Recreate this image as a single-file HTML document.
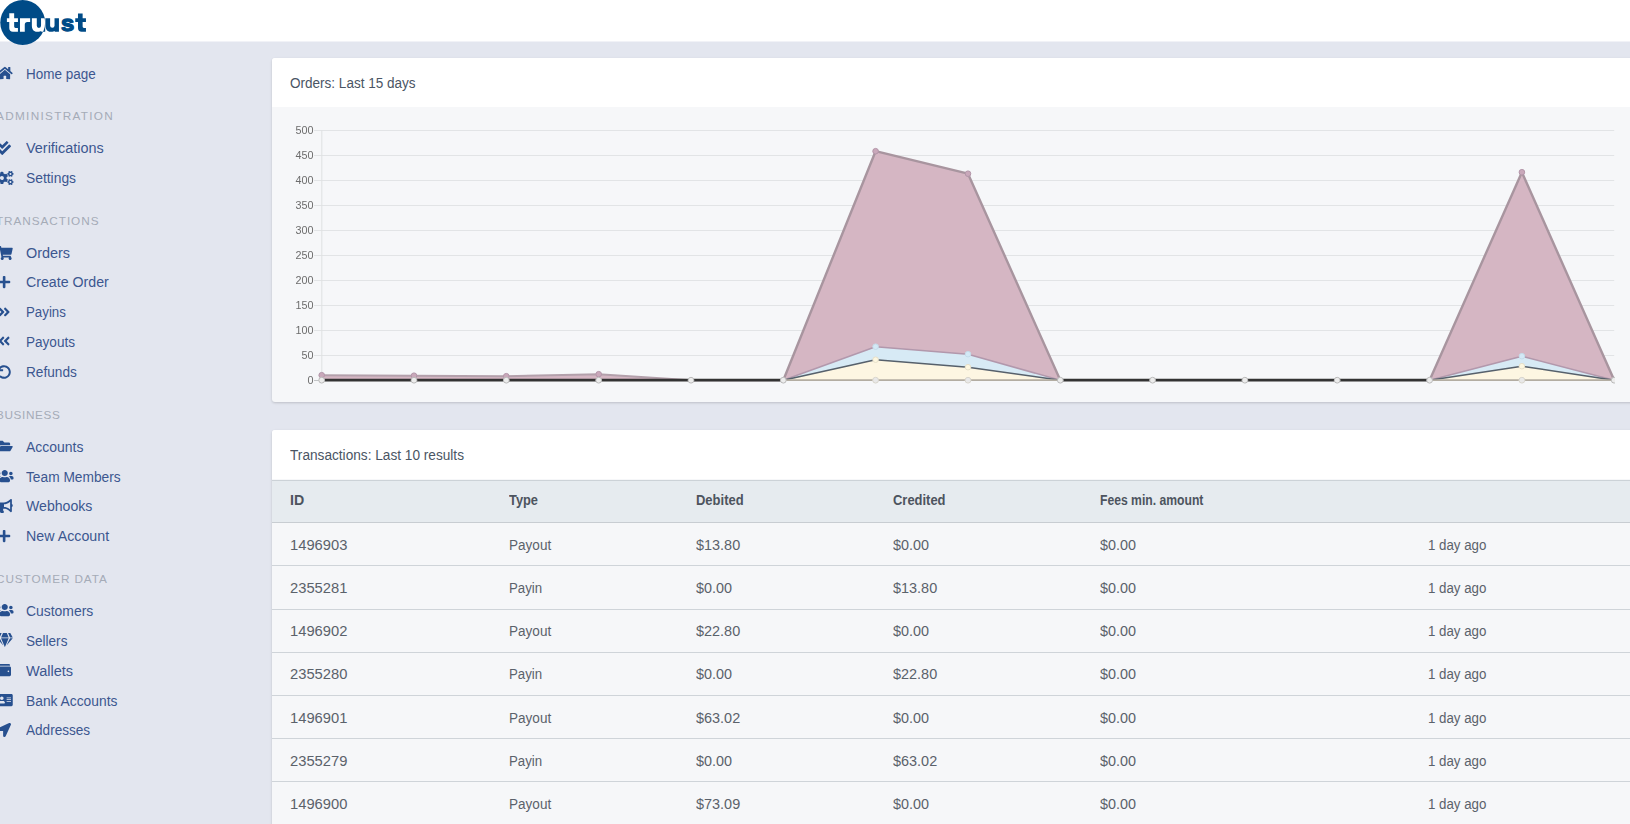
<!DOCTYPE html>
<html>
<head>
<meta charset="utf-8">
<title>Truust</title>
<style>
*{box-sizing:border-box;}
html,body{margin:0;padding:0;}
body{width:1630px;height:824px;overflow:hidden;background:#e3e6ef;font-family:"Liberation Sans",sans-serif;position:relative;}
#topbar{position:absolute;left:0;top:0;width:1630px;height:42px;background:#fff;border-bottom:1px solid #f1f2f7;}
#logo{position:absolute;left:0;top:0;}
.t{position:absolute;white-space:nowrap;font-family:"Liberation Sans",sans-serif;transform-origin:0 50%;}
.card{position:absolute;left:272px;width:1400px;background:#f6f7f9;border-radius:3px;box-shadow:0 1px 3px rgba(0,0,0,.12),0 1px 2px rgba(0,0,0,.05);overflow:hidden;}
.card .hd{position:absolute;left:0;top:0;width:1400px;height:49px;background:#fff;}
#c1{top:58px;height:344px;}
#c2{top:430px;height:420px;}
#chart{position:absolute;left:0;top:0;will-change:transform;}
</style>
</head>
<body>
<div id="topbar"></div>
<svg id="logo" width="100" height="50" viewBox="0 0 100 50">
<defs><clipPath id="cc"><circle cx="22.7" cy="22.5" r="22.45"/></clipPath>
<g id="lt" font-family="Liberation Sans, sans-serif" font-weight="700" font-size="24.6" stroke-width="0" stroke-linejoin="round"><path d="M9.27 13.30H14.17V18.19H17.93V22.1H14.17V26.60Q14.17 27.9 15.47 27.9H17.93V31.8H12.97Q9.27 31.8 9.27 28.10V22.1H6.89V18.19H9.27Z M19.97 18.19H30.16V22.1H27.37Q24.77 22.1 24.77 24.70V31.8H19.97Z M31.86 18.19H36.79V25.77A2.12 2.12 0 0 0 41.04 25.77V18.19H45.20V31.8H41.24V31.10C39.04 32.35 31.86 32.70 31.86 25.90Z M45.55 18.19H50.12V25.69A2.21 2.21 0 0 0 54.53 25.69V18.19H58.95V31.8H54.73V31.10C52.53 32.35 45.55 32.70 45.55 25.90Z M77.98 13.45H82.63V18.19H85.96V22.1H82.63V26.60Q82.63 27.9 83.93 27.9H85.96V31.8H81.68Q77.98 31.8 77.98 28.10V22.1H75.26V18.19H77.98Z"/><text transform="translate(61.06,30.98) scale(0.966,0.923)" stroke-width="1.5">s</text></g></defs>
<use href="#lt" fill="#004b87" stroke="#004b87"/>
<circle cx="22.7" cy="22.5" r="22.45" fill="#004b87"/>
<use href="#lt" fill="#fff" stroke="#fff" clip-path="url(#cc)"/>
</svg>
<div id="side">
<svg style="position:absolute;left:-3.47px;top:65.80px;overflow:visible" width="15.75" height="14.0" viewBox="0 0 576 512"><path fill="#27508f" d="M280.37 148.26L96 300.11V464a16 16 0 0 0 16 16l112.06-.29a16 16 0 0 0 15.92-16V368a16 16 0 0 1 16-16h64a16 16 0 0 1 16 16v95.64a16 16 0 0 0 16 16.05L464 480a16 16 0 0 0 16-16V300L295.67 148.26a12.19 12.19 0 0 0-15.3 0zM571.6 251.47L488 182.56V44.05a12 12 0 0 0-12-12h-56a12 12 0 0 0-12 12v72.61L318.47 43a48 48 0 0 0-61 0L4.34 251.47a12 12 0 0 0-1.6 16.9l25.5 31A12 12 0 0 0 45.15 301l235.22-193.74a12.19 12.19 0 0 1 15.3 0L530.9 301a12 12 0 0 0 16.9-1.6l25.5-31a12 12 0 0 0-1.7-16.93z"/></svg>
<div class="t" style="left:26.00px;top:64.00px;font-size:14px;line-height:20px;color:#3c578f;transform:scaleX(0.9628);">Home page</div>
<svg style="position:absolute;left:-2.60px;top:140.80px;overflow:visible" width="14.00" height="14.0" viewBox="0 0 512 512"><path fill="#27508f" d="M505 174.8l-39.6-39.6c-9.4-9.4-24.6-9.4-33.9 0L192 374.700 80.600 263.200c-9.400-9.400-24.600-9.400-33.900 0L7 302.900c-9.400 9.400-9.400 24.600 0 34L175 505c9.400 9.400 24.600 9.400 33.900 0l296-296.200c9.400-9.500 9.400-24.700.1-34zm-324.300 106c6.200 6.300 16.400 6.300 22.600 0l208-208.200c6.200-6.300 6.200-16.400 0-22.600L366.100 4.700c-6.200-6.300-16.400-6.300-22.600 0L192 156.200l-55.400-55.500c-6.200-6.300-16.400-6.300-22.600 0L68.700 146c-6.200 6.300-6.200 16.400 0 22.600l112 112.200z"/></svg>
<div class="t" style="left:26.00px;top:138.00px;font-size:14px;line-height:20px;color:#3c578f;transform:scaleX(1.0294);">Verifications</div>
<svg style="position:absolute;left:-4.35px;top:170.60px;overflow:visible" width="17.50" height="14.0" viewBox="0 0 640 512"><path fill="#27508f" d="M512.1 191l-8.2 14.3c-3 5.3-9.4 7.5-15.1 5.4-11.800-4.400-22.600-10.700-32.100-18.600-4.600-3.800-5.800-10.500-2.800-15.700l8.200-14.300c-6.900-8-12.300-17.300-15.900-27.400h-16.500c-6 0-11.200-4.300-12.200-10.300-2-12-2.100-24.600 0-37.100 1-6 6.200-10.400 12.200-10.400h16.500c3.600-10.100 9-19.400 15.900-27.400l-8.200-14.300c-3-5.200-1.900-11.900 2.800-15.700 9.500-7.900 20.400-14.200 32.100-18.600 5.700-2.100 12.100.1 15.100 5.400l8.200 14.300c10.500-1.900 21.200-1.900 31.700 0L552 6.300c3-5.300 9.400-7.500 15.100-5.400 11.800 4.400 22.600 10.700 32.100 18.600 4.600 3.800 5.800 10.500 2.800 15.700l-8.200 14.300c6.900 8 12.300 17.300 15.900 27.400h16.500c6 0 11.200 4.300 12.200 10.300 2 12 2.100 24.600 0 37.100-1 6-6.200 10.400-12.200 10.400h-16.500c-3.600 10.100-9 19.400-15.900 27.400l8.200 14.300c3 5.200 1.900 11.900-2.800 15.700-9.500 7.900-20.400 14.200-32.100 18.600-5.700 2.100-12.100-.1-15.100-5.400l-8.200-14.300c-10.400 1.900-21.200 1.900-31.700 0zm-10.500-58.800c38.500 29.600 82.400-14.300 52.800-52.800-38.500-29.700-82.400 14.300-52.800 52.800zM386.300 286.100l33.700 16.800c10.100 5.800 14.500 18.100 10.500 29.100-8.900 24.200-26.400 46.400-42.600 65.800-7.400 8.900-20.200 11.100-30.300 5.300l-29.100-16.800c-16 13.700-34.600 24.600-54.900 31.700v33.600c0 11.600-8.300 21.600-19.700 23.600-24.600 4.200-50.400 4.400-75.900 0-11.500-2-20-11.900-20-23.600V418c-20.300-7.200-38.900-18-54.900-31.700L74 403c-10 5.800-22.900 3.600-30.300-5.300-16.200-19.400-33.300-41.600-42.200-65.700-4-10.900.4-23.200 10.500-29.100l33.300-16.800c-3.900-20.900-3.900-42.400 0-63.400L12 205.800c-10.100-5.800-14.600-18.100-10.500-29 8.900-24.200 26-46.400 42.200-65.800 7.400-8.900 20.200-11.100 30.300-5.300l29.100 16.800c16-13.700 34.600-24.600 54.900-31.700V57.100c0-11.500 8.200-21.500 19.600-23.500 24.600-4.200 50.500-4.400 76-.1 11.500 2 20 11.900 20 23.600v33.600c20.300 7.200 38.900 18 54.900 31.700l29.100-16.800c10-5.800 22.900-3.600 30.300 5.300 16.200 19.400 33.200 41.600 42.100 65.800 4 10.900.1 23.200-10 29.100l-33.700 16.800c3.900 21 3.900 42.500 0 63.500zm-117.600 21.100c59.200-77-28.700-164.900-105.700-105.700-59.200 77 28.700 164.900 105.700 105.700zm243.400 182.700l-8.200 14.300c-3 5.300-9.400 7.500-15.100 5.400-11.800-4.400-22.600-10.700-32.100-18.600-4.600-3.800-5.800-10.500-2.800-15.700l8.200-14.300c-6.900-8-12.300-17.300-15.900-27.400h-16.500c-6 0-11.200-4.300-12.200-10.300-2-12-2.100-24.600 0-37.100 1-6 6.200-10.400 12.200-10.400h16.500c3.600-10.100 9-19.400 15.900-27.400l-8.200-14.300c-3-5.200-1.900-11.900 2.800-15.700 9.500-7.900 20.400-14.200 32.100-18.600 5.700-2.100 12.100.1 15.100 5.400l8.200 14.300c10.500-1.900 21.200-1.900 31.700 0l8.200-14.300c3-5.300 9.400-7.500 15.100-5.400 11.800 4.400 22.600 10.700 32.100 18.600 4.600 3.800 5.800 10.500 2.800 15.700l-8.200 14.300c6.900 8 12.300 17.300 15.900 27.400h16.500c6 0 11.200 4.300 12.200 10.300 2 12 2.100 24.600 0 37.100-1 6-6.200 10.400-12.200 10.400h-16.500c-3.600 10.100-9 19.400-15.900 27.400l8.200 14.300c3 5.200 1.900 11.900-2.800 15.700-9.500 7.900-20.400 14.200-32.100 18.600-5.700 2.100-12.100-.1-15.100-5.400l-8.200-14.300c-10.400 1.900-21.200 1.900-31.700 0zM501.600 431c38.500 29.600 82.400-14.300 52.800-52.800-38.500-29.600-82.400 14.300-52.800 52.800z"/></svg>
<div class="t" style="left:26.00px;top:168.00px;font-size:14px;line-height:20px;color:#3c578f;transform:scaleX(0.9883);">Settings</div>
<svg style="position:absolute;left:-3.47px;top:245.60px;overflow:visible" width="15.75" height="14.0" viewBox="0 0 576 512"><path fill="#27508f" d="M528.12 301.319l47.273-208C578.806 78.301 567.391 64 551.99 64H159.208l-9.166-44.81C147.758 8.021 137.93 0 126.529 0H24C10.745 0 0 10.745 0 24v16c0 13.255 10.745 24 24 24h69.883l70.248 343.435C147.325 417.100 136 435.222 136 456c0 30.928 25.072 56 56 56s56-25.072 56-56c0-15.674-6.447-29.835-16.824-40h209.647C430.447 426.165 424 440.326 424 456c0 30.928 25.072 56 56 56s56-25.072 56-56c0-22.172-12.888-41.332-31.579-50.405l5.517-24.276c3.413-15.018-8.002-29.319-23.403-29.319H218.117l-6.545-32h293.145c11.206 0 20.920-7.754 23.403-18.681z"/></svg>
<div class="t" style="left:26.00px;top:243.00px;font-size:14px;line-height:20px;color:#3c578f;transform:scaleX(1.0304);">Orders</div>
<svg style="position:absolute;left:-1.72px;top:274.80px;overflow:visible" width="12.25" height="14.0" viewBox="0 0 448 512"><path fill="#27508f" d="M416 208H272V64c0-17.67-14.33-32-32-32h-32c-17.67 0-32 14.33-32 32v144H32c-17.67 0-32 14.33-32 32v32c0 17.67 14.33 32 32 32h144v144c0 17.67 14.33 32 32 32h32c17.67 0 32-14.33 32-32V304h144c17.67 0 32-14.33 32-32v-32c0-17.67-14.33-32-32-32z"/></svg>
<div class="t" style="left:26.00px;top:272.00px;font-size:14px;line-height:20px;color:#3c578f;transform:scaleX(1.0134);">Create Order</div>
<svg style="position:absolute;left:-1.72px;top:304.50px;overflow:visible" width="12.25" height="14.0" viewBox="0 0 448 512"><path fill="#27508f" d="M224.3 273l-136 136c-9.4 9.4-24.6 9.4-33.9 0l-22.6-22.6c-9.4-9.4-9.4-24.6 0-33.9l96.4-96.4-96.4-96.4c-9.4-9.4-9.4-24.6 0-33.9L54.3 103c9.4-9.4 24.6-9.4 33.9 0l136 136c9.5 9.4 9.5 24.6.1 34zm192-34l-136-136c-9.4-9.4-24.6-9.4-33.9 0l-22.6 22.6c-9.4 9.4-9.4 24.6 0 33.9l96.4 96.4-96.4 96.4c-9.4 9.4-9.4 24.6 0 33.9l22.6 22.6c9.4 9.4 24.6 9.4 33.9 0l136-136c9.4-9.2 9.4-24.4 0-33.800z"/></svg>
<div class="t" style="left:26.00px;top:302.00px;font-size:14px;line-height:20px;color:#3c578f;transform:scaleX(0.9493);">Payins</div>
<svg style="position:absolute;left:-1.72px;top:334.40px;overflow:visible" width="12.25" height="14.0" viewBox="0 0 448 512"><path fill="#27508f" d="M223.7 239l136-136c9.4-9.4 24.6-9.4 33.9 0l22.6 22.6c9.4 9.4 9.4 24.6 0 33.9L319.9 256l96.4 96.4c9.4 9.4 9.4 24.6 0 33.9L393.7 409c-9.4 9.4-24.6 9.4-33.9 0l-136-136c-9.5-9.4-9.5-24.6-.1-34zm-192 34l136 136c9.4 9.4 24.6 9.4 33.9 0l22.6-22.6c9.4-9.4 9.4-24.6 0-33.9L127.9 256l96.4-96.4c9.4-9.4 9.4-24.6 0-33.9L201.700 103c-9.4-9.4-24.6-9.4-33.9 0l-136 136c-9.5 9.4-9.5 24.6-.1 34z"/></svg>
<div class="t" style="left:26.00px;top:332.00px;font-size:14px;line-height:20px;color:#3c578f;transform:scaleX(0.9685);">Payouts</div>
<svg style="position:absolute;left:-2.60px;top:364.50px;overflow:visible" width="14.00" height="14.0" viewBox="0 0 512 512"><path fill="#27508f" d="M212.333 224.333H12c-6.627 0-12-5.373-12-12V12C0 5.373 5.373 0 12 0h48c6.627 0 12 5.373 12 12v78.112C117.773 39.279 184.260 7.470 258.175 8.007c136.906.994 246.448 111.623 246.157 248.532C504.041 393.258 393.120 504 256.333 504c-64.089 0-122.496-24.313-166.510-64.215-5.099-4.622-5.334-12.554-.467-17.420l33.967-33.967c4.474-4.474 11.662-4.717 16.401-.525C170.760 415.336 211.580 432 256.333 432c97.268 0 176-78.716 176-176 0-97.267-78.716-176-176-176-58.496 0-110.280 28.476-142.274 72.333h98.274c6.627 0 12 5.373 12 12v48c0 6.627-5.373 12-12 12z"/></svg>
<div class="t" style="left:26.00px;top:362.00px;font-size:14px;line-height:20px;color:#3c578f;transform:scaleX(0.9740);">Refunds</div>
<svg style="position:absolute;left:-3.47px;top:439.40px;overflow:visible" width="15.75" height="14.0" viewBox="0 0 576 512"><path fill="#27508f" d="M572.694 292.093L500.270 416.248A63.997 63.997 0 0 1 444.989 448H45.025c-18.523 0-30.064-20.093-20.731-36.093l72.424-124.155A64 64 0 0 1 152 256h399.964c18.523 0 30.064 20.093 20.730 36.093zM152 224h328v-48c0-26.510-21.490-48-48-48H272l-64-64H48C21.490 64 0 85.490 0 112v278.046l69.077-118.418C86.214 242.250 117.989 224 152 224z"/></svg>
<div class="t" style="left:26.00px;top:437.00px;font-size:14px;line-height:20px;color:#3c578f;transform:scaleX(0.9984);">Accounts</div>
<svg style="position:absolute;left:-4.35px;top:469.30px;overflow:visible" width="17.50" height="14.0" viewBox="0 0 640 512"><path fill="#27508f" d="M96 224c35.3 0 64-28.7 64-64s-28.7-64-64-64-64 28.7-64 64 28.7 64 64 64zm448 0c35.3 0 64-28.7 64-64s-28.7-64-64-64-64 28.7-64 64 28.7 64 64 64zm32 32h-64c-17.6 0-33.5 7.1-45.1 18.6 40.3 22.1 68.9 62 75.1 109.4h66c17.7 0 32-14.3 32-32v-32c0-35.3-28.7-64-64-64zm-256 0c61.9 0 112-50.1 112-112S381.9 32 320 32 208 82.1 208 144s50.1 112 112 112zm76.8 32h-8.3c-20.8 10-43.9 16-68.5 16s-47.6-6-68.500-16h-8.300C179.600 288 128 339.600 128 403.200V432c0 26.500 21.500 48 48 48h288c26.500 0 48-21.500 48-48v-28.800c0-63.600-51.600-115.200-115.200-115.200zm-223.700-13.400C161.500 263.100 145.600 256 128 256H64c-35.300 0-64 28.700-64 64v32c0 17.700 14.300 32 32 32h65.900c6.300-47.400 34.900-87.300 75.200-109.400z"/></svg>
<div class="t" style="left:26.00px;top:467.00px;font-size:14px;line-height:20px;color:#3c578f;transform:scaleX(0.9806);">Team Members</div>
<svg style="position:absolute;left:-3.47px;top:498.50px;overflow:visible" width="15.75" height="14.0" viewBox="0 0 576 512"><path fill="#27508f" d="M576 240c0-23.63-12.95-44.04-32-55.12V32.01C544 23.26 537.02 0 512 0c-7.12 0-14.19 2.38-19.98 7.02l-85.03 68.03C364.28 109.19 310.66 128 256 128H64c-35.35 0-64 28.65-64 64v96c0 35.35 28.65 64 64 64h33.7c-1.39 10.48-2.18 21.14-2.18 32 0 39.77 9.26 77.35 25.56 110.94 5.19 10.69 16.52 17.06 28.4 17.06h74.28c26.05 0 41.69-29.84 25.9-50.56-16.4-21.52-26.15-48.36-26.15-77.44 0-11.11 1.62-21.79 4.41-32H256c54.66 0 108.28 18.81 150.98 52.95l85.03 68.03a32.023 32.023 0 0 0 19.98 7.02c24.92 0 32-22.78 32-32V295.13C563.05 284.04 576 263.63 576 240zm-96 141.42l-33.05-26.44C392.95 311.78 325.12 288 256 288v-96c69.12 0 136.95-23.78 190.95-66.98L480 98.58v282.84z"/></svg>
<div class="t" style="left:26.00px;top:496.00px;font-size:14px;line-height:20px;color:#3c578f;transform:scaleX(1.0075);">Webhooks</div>
<svg style="position:absolute;left:-1.72px;top:528.90px;overflow:visible" width="12.25" height="14.0" viewBox="0 0 448 512"><path fill="#27508f" d="M416 208H272V64c0-17.67-14.33-32-32-32h-32c-17.67 0-32 14.33-32 32v144H32c-17.67 0-32 14.33-32 32v32c0 17.67 14.33 32 32 32h144v144c0 17.67 14.33 32 32 32h32c17.67 0 32-14.33 32-32V304h144c17.67 0 32-14.33 32-32v-32c0-17.67-14.33-32-32-32z"/></svg>
<div class="t" style="left:26.00px;top:526.00px;font-size:14px;line-height:20px;color:#3c578f;transform:scaleX(1.0169);">New Account</div>
<svg style="position:absolute;left:-4.35px;top:602.90px;overflow:visible" width="17.50" height="14.0" viewBox="0 0 640 512"><path fill="#27508f" d="M96 224c35.3 0 64-28.7 64-64s-28.7-64-64-64-64 28.7-64 64 28.7 64 64 64zm448 0c35.3 0 64-28.7 64-64s-28.7-64-64-64-64 28.7-64 64 28.7 64 64 64zm32 32h-64c-17.6 0-33.5 7.1-45.1 18.6 40.3 22.1 68.9 62 75.1 109.4h66c17.7 0 32-14.3 32-32v-32c0-35.3-28.7-64-64-64zm-256 0c61.9 0 112-50.1 112-112S381.9 32 320 32 208 82.1 208 144s50.1 112 112 112zm76.8 32h-8.3c-20.8 10-43.9 16-68.5 16s-47.6-6-68.500-16h-8.300C179.600 288 128 339.600 128 403.200V432c0 26.500 21.500 48 48 48h288c26.500 0 48-21.500 48-48v-28.800c0-63.600-51.600-115.200-115.200-115.200zm-223.700-13.400C161.500 263.100 145.600 256 128 256H64c-35.300 0-64 28.700-64 64v32c0 17.700 14.300 32 32 32h65.900c6.300-47.400 34.900-87.300 75.200-109.400z"/></svg>
<div class="t" style="left:26.00px;top:601.00px;font-size:14px;line-height:20px;color:#3c578f;transform:scaleX(0.9943);">Customers</div>
<svg style="position:absolute;left:-3.47px;top:632.70px;overflow:visible" width="15.75" height="14.0" viewBox="0 0 576 512"><path fill="#27508f" d="M485.5 0L576 160H474.9L405.7 0h79.8zm-128 0l69.2 160H149.3L218.5 0h139zm-267 0h79.8l-69.2 160H0L90.5 0zM0 192h100.7l123 251.7c1.5 3.1-2.7 5.9-5 3.300L0 192zm148.2 0h279.6l-137 318.200c-1 2.400-4.500 2.400-5.500 0L148.200 192zm204.100 251.700l123-251.700H576L357.300 446.900c-2.300 2.700-6.500-.1-5-3.200z"/></svg>
<div class="t" style="left:26.00px;top:631.00px;font-size:14px;line-height:20px;color:#3c578f;transform:scaleX(0.9674);">Sellers</div>
<svg style="position:absolute;left:-2.60px;top:662.80px;overflow:visible" width="14.00" height="14.0" viewBox="0 0 512 512"><path fill="#27508f" d="M461.2 128H80c-8.84 0-16-7.16-16-16s7.16-16 16-16h384c8.84 0 16-7.16 16-16 0-26.51-21.49-48-48-48H64C28.65 32 0 60.65 0 96v320c0 35.35 28.65 64 64 64h397.2c28.02 0 50.8-21.53 50.8-48V176c0-26.47-22.78-48-50.8-48zM416 336c-17.67 0-32-14.33-32-32s14.33-32 32-32 32 14.33 32 32-14.33 32-32 32z"/></svg>
<div class="t" style="left:26.00px;top:661.00px;font-size:14px;line-height:20px;color:#3c578f;transform:scaleX(1.0377);">Wallets</div>
<svg style="position:absolute;left:-3.47px;top:692.70px;overflow:visible" width="15.75" height="14.0" viewBox="0 0 576 512"><path fill="#27508f" d="M528 32H48C21.5 32 0 53.5 0 80v352c0 26.5 21.5 48 48 48h480c26.5 0 48-21.5 48-48V80c0-26.5-21.5-48-48-48zm-352 96c35.3 0 64 28.7 64 64s-28.7 64-64 64-64-28.7-64-64 28.7-64 64-64zm112 236.800c0 10.600-10 19.200-22.400 19.200H86.400C74 384 64 375.400 64 364.800v-19.200c0-31.800 30.100-57.600 67.200-57.600h5c12.300 5.100 25.700 8 39.800 8s27.600-2.900 39.800-8h5c37.100 0 67.200 25.800 67.200 57.600v19.200zM512 312c0 4.400-3.600 8-8 8H360c-4.400 0-8-3.600-8-8v-16c0-4.400 3.600-8 8-8h144c4.400 0 8 3.600 8 8v16zm0-64c0 4.400-3.600 8-8 8H360c-4.400 0-8-3.600-8-8v-16c0-4.400 3.600-8 8-8h144c4.400 0 8 3.600 8 8v16zm0-64c0 4.400-3.600 8-8 8H360c-4.400 0-8-3.600-8-8v-16c0-4.400 3.600-8 8-8h144c4.400 0 8 3.600 8 8v16z"/></svg>
<div class="t" style="left:26.00px;top:691.00px;font-size:14px;line-height:20px;color:#3c578f;transform:scaleX(0.9868);">Bank Accounts</div>
<svg style="position:absolute;left:-2.60px;top:722.70px;overflow:visible" width="14.00" height="14.0" viewBox="0 0 512 512"><path fill="#27508f" d="M444.52 3.52L28.74 195.42c-47.97 22.39-31.98 92.75 19.19 92.75h175.91v175.91c0 51.17 70.36 67.17 92.75 19.19l191.9-415.78c15.99-38.39-25.59-79.97-63.97-63.97z"/></svg>
<div class="t" style="left:26.00px;top:720.00px;font-size:14px;line-height:20px;color:#3c578f;transform:scaleX(0.9689);">Addresses</div>
<div class="t" style="left:-4.20px;top:108.00px;font-size:10.8px;line-height:16px;color:#a5abb7;letter-spacing:1.198px;transform:scaleX(1.09);">ADMINISTRATION</div>
<div class="t" style="left:-4.20px;top:213.00px;font-size:10.8px;line-height:16px;color:#a5abb7;letter-spacing:0.858px;transform:scaleX(1.09);">TRANSACTIONS</div>
<div class="t" style="left:-4.20px;top:407.00px;font-size:10.8px;line-height:16px;color:#a5abb7;letter-spacing:0.573px;transform:scaleX(1.09);">BUSINESS</div>
<div class="t" style="left:-4.20px;top:571.00px;font-size:10.8px;line-height:16px;color:#a5abb7;letter-spacing:0.823px;transform:scaleX(1.09);">CUSTOMER DATA</div>
</div>
<div class="card" id="c1"><div class="hd"></div>
<div class="t" style="left:17.90px;top:15.00px;font-size:14px;line-height:20px;color:#4a5564;transform:scaleX(0.9665);">Orders: Last 15 days</div>
<svg id="chart" width="1342.6" height="343" viewBox="0 0 1342.6 343">
<line x1="42" x2="1342.2" y1="322.5" y2="322.5" stroke="#e2e4e6" stroke-width="1"/>
<line x1="42" x2="1342.2" y1="297.5" y2="297.5" stroke="#e2e4e6" stroke-width="1"/>
<line x1="42" x2="1342.2" y1="272.5" y2="272.5" stroke="#e2e4e6" stroke-width="1"/>
<line x1="42" x2="1342.2" y1="247.5" y2="247.5" stroke="#e2e4e6" stroke-width="1"/>
<line x1="42" x2="1342.2" y1="222.5" y2="222.5" stroke="#e2e4e6" stroke-width="1"/>
<line x1="42" x2="1342.2" y1="197.5" y2="197.5" stroke="#e2e4e6" stroke-width="1"/>
<line x1="42" x2="1342.2" y1="172.5" y2="172.5" stroke="#e2e4e6" stroke-width="1"/>
<line x1="42" x2="1342.2" y1="147.5" y2="147.5" stroke="#e2e4e6" stroke-width="1"/>
<line x1="42" x2="1342.2" y1="122.5" y2="122.5" stroke="#e2e4e6" stroke-width="1"/>
<line x1="42" x2="1342.2" y1="97.5" y2="97.5" stroke="#e2e4e6" stroke-width="1"/>
<line x1="42" x2="1342.2" y1="72.5" y2="72.5" stroke="#e2e4e6" stroke-width="1"/>
<line x1="49.8" x2="49.8" y1="72.19999999999999" y2="322.2" stroke="#dfe1e3" stroke-width="1"/>
<line x1="42" x2="49.69999999999999" y1="322.5" y2="322.5" stroke="#c2c4c6" stroke-width="1"/>
<text x="41.39999999999998" y="326.1" text-anchor="end" font-size="10.8" fill="#6c6c6c" font-family="Liberation Sans, sans-serif">0</text>
<text x="41.39999999999998" y="301.1" text-anchor="end" font-size="10.8" fill="#6c6c6c" font-family="Liberation Sans, sans-serif">50</text>
<text x="41.39999999999998" y="276.1" text-anchor="end" font-size="10.8" fill="#6c6c6c" font-family="Liberation Sans, sans-serif">100</text>
<text x="41.39999999999998" y="251.1" text-anchor="end" font-size="10.8" fill="#6c6c6c" font-family="Liberation Sans, sans-serif">150</text>
<text x="41.39999999999998" y="226.1" text-anchor="end" font-size="10.8" fill="#6c6c6c" font-family="Liberation Sans, sans-serif">200</text>
<text x="41.39999999999998" y="201.1" text-anchor="end" font-size="10.8" fill="#6c6c6c" font-family="Liberation Sans, sans-serif">250</text>
<text x="41.39999999999998" y="176.1" text-anchor="end" font-size="10.8" fill="#6c6c6c" font-family="Liberation Sans, sans-serif">300</text>
<text x="41.39999999999998" y="151.1" text-anchor="end" font-size="10.8" fill="#6c6c6c" font-family="Liberation Sans, sans-serif">350</text>
<text x="41.39999999999998" y="126.1" text-anchor="end" font-size="10.8" fill="#6c6c6c" font-family="Liberation Sans, sans-serif">400</text>
<text x="41.39999999999998" y="101.1" text-anchor="end" font-size="10.8" fill="#6c6c6c" font-family="Liberation Sans, sans-serif">450</text>
<text x="41.39999999999998" y="76.1" text-anchor="end" font-size="10.8" fill="#6c6c6c" font-family="Liberation Sans, sans-serif">500</text>
<polygon points="49.7,317.2 142.0,317.7 234.3,318.2 326.7,316.2 419.0,322.2 511.3,322.2 603.6,93.2 696.0,115.7 788.3,322.2 880.6,322.2 972.9,322.2 1065.2,322.2 1157.6,322.2 1249.9,114.2 1342.2,322.2 1342.2,322.2 49.7,322.2" fill="#d5b6c3"/>
<polyline points="49.7,317.2 142.0,317.7 234.3,318.2 326.7,316.2 419.0,322.2 511.3,322.2" fill="none" stroke="#b3a0ab" stroke-width="2.0" stroke-linejoin="round" stroke-linecap="butt"/>
<polyline points="511.3,322.2 603.6,93.2 696.0,115.7 788.3,322.2" fill="none" stroke="#a8959f" stroke-width="2.4" stroke-linejoin="round" stroke-linecap="butt"/>
<polyline points="1157.6,322.2 1249.9,114.2 1342.2,322.2" fill="none" stroke="#a8959f" stroke-width="2.4" stroke-linejoin="round" stroke-linecap="butt"/>
<circle cx="49.7" cy="317.2" r="2.8" fill="#c9a8ba" stroke="#b295a8" stroke-width="1"/>
<circle cx="142.0" cy="317.7" r="2.8" fill="#c9a8ba" stroke="#b295a8" stroke-width="1"/>
<circle cx="234.3" cy="318.2" r="2.8" fill="#c9a8ba" stroke="#b295a8" stroke-width="1"/>
<circle cx="326.7" cy="316.2" r="2.8" fill="#c9a8ba" stroke="#b295a8" stroke-width="1"/>
<circle cx="603.6" cy="93.2" r="2.8" fill="#c9a8ba" stroke="#b295a8" stroke-width="1"/>
<circle cx="696.0" cy="115.7" r="2.8" fill="#c9a8ba" stroke="#b295a8" stroke-width="1"/>
<circle cx="1249.9" cy="114.2" r="2.8" fill="#c9a8ba" stroke="#b295a8" stroke-width="1"/>
<polyline points="49.7,322.2 142.0,322.2 234.3,322.2 326.7,322.2 419.0,322.2 511.3,322.2" fill="none" stroke="#333333" stroke-width="2.8" stroke-linejoin="round" stroke-linecap="butt"/>
<polyline points="788.3,322.2 880.6,322.2 972.9,322.2 1065.2,322.2 1157.6,322.2" fill="none" stroke="#333333" stroke-width="2.8" stroke-linejoin="round" stroke-linecap="butt"/>
<polygon points="49.7,322.2 142.0,322.2 234.3,322.2 326.7,322.2 419.0,322.2 511.3,322.2 603.6,288.7 696.0,296.2 788.3,322.2 880.6,322.2 972.9,322.2 1065.2,322.2 1157.6,322.2 1249.9,298.2 1342.2,322.2 1342.2,322.2 49.7,322.2" fill="#d7eaf5"/>
<polyline points="511.3,322.2 603.6,288.7 696.0,296.2 788.3,322.2" fill="none" stroke="#b298ac" stroke-width="1.5" stroke-linejoin="round" stroke-linecap="butt"/>
<polyline points="1157.6,322.2 1249.9,298.2 1342.2,322.2" fill="none" stroke="#b298ac" stroke-width="1.5" stroke-linejoin="round" stroke-linecap="butt"/>
<polygon points="49.7,322.2 142.0,322.2 234.3,322.2 326.7,322.2 419.0,322.2 511.3,322.2 603.6,301.7 696.0,309.2 788.3,322.2 880.6,322.2 972.9,322.2 1065.2,322.2 1157.6,322.2 1249.9,308.2 1342.2,322.2 1342.2,322.2 49.7,322.2" fill="#fdf6e2"/>
<polyline points="511.3,322.2 603.6,301.7 696.0,309.2 788.3,322.2" fill="none" stroke="#56606b" stroke-width="1.6" stroke-linejoin="round" stroke-linecap="butt"/>
<polyline points="1157.6,322.2 1249.9,308.2 1342.2,322.2" fill="none" stroke="#56606b" stroke-width="1.6" stroke-linejoin="round" stroke-linecap="butt"/>
<polyline points="511.3,322.2 603.6,322.2 696.0,322.2 788.3,322.2" fill="none" stroke="#b3ada2" stroke-width="1.8" stroke-linejoin="round" stroke-linecap="butt"/>
<polyline points="1157.6,322.2 1249.9,322.2 1342.2,322.2" fill="none" stroke="#b3ada2" stroke-width="1.8" stroke-linejoin="round" stroke-linecap="butt"/>
<circle cx="603.6" cy="288.7" r="2.8" fill="#d3e9f6" stroke="#c4dcea" stroke-width="1"/>
<circle cx="696.0" cy="296.2" r="2.8" fill="#d3e9f6" stroke="#c4dcea" stroke-width="1"/>
<circle cx="1249.9" cy="298.2" r="2.8" fill="#d3e9f6" stroke="#c4dcea" stroke-width="1"/>
<circle cx="603.6" cy="301.7" r="2.8" fill="#fdf7e0" stroke="#e6dfc9" stroke-width="1"/>
<circle cx="696.0" cy="309.2" r="2.8" fill="#fdf7e0" stroke="#e6dfc9" stroke-width="1"/>
<circle cx="1249.9" cy="308.2" r="2.8" fill="#fdf7e0" stroke="#e6dfc9" stroke-width="1"/>
<circle cx="49.7" cy="322.2" r="2.9" fill="#ececec" stroke="#b9b9b9" stroke-width="1"/>
<circle cx="142.0" cy="322.2" r="2.9" fill="#ececec" stroke="#b9b9b9" stroke-width="1"/>
<circle cx="234.3" cy="322.2" r="2.9" fill="#ececec" stroke="#b9b9b9" stroke-width="1"/>
<circle cx="326.7" cy="322.2" r="2.9" fill="#ececec" stroke="#b9b9b9" stroke-width="1"/>
<circle cx="419.0" cy="322.2" r="2.9" fill="#ececec" stroke="#b9b9b9" stroke-width="1"/>
<circle cx="511.3" cy="322.2" r="2.9" fill="#ececec" stroke="#b9b9b9" stroke-width="1"/>
<circle cx="788.3" cy="322.2" r="2.9" fill="#ececec" stroke="#b9b9b9" stroke-width="1"/>
<circle cx="880.6" cy="322.2" r="2.9" fill="#ececec" stroke="#b9b9b9" stroke-width="1"/>
<circle cx="972.9" cy="322.2" r="2.9" fill="#ececec" stroke="#b9b9b9" stroke-width="1"/>
<circle cx="1065.2" cy="322.2" r="2.9" fill="#ececec" stroke="#b9b9b9" stroke-width="1"/>
<circle cx="1157.6" cy="322.2" r="2.9" fill="#ececec" stroke="#b9b9b9" stroke-width="1"/>
<circle cx="603.6" cy="322.2" r="2.9" fill="#e8e8e8" stroke="#d8d5cc" stroke-width="1"/>
<circle cx="696.0" cy="322.2" r="2.9" fill="#e8e8e8" stroke="#d8d5cc" stroke-width="1"/>
<circle cx="1249.9" cy="322.2" r="2.9" fill="#e8e8e8" stroke="#d8d5cc" stroke-width="1"/>
<circle cx="1342.2" cy="322.2" r="2.9" fill="#ececec" stroke="#b9b9b9" stroke-width="1"/>
</svg>
</div>
<div class="card" id="c2"><div class="hd"></div>
<div class="t" style="left:17.90px;top:15.00px;font-size:14px;line-height:20px;color:#4a5564;transform:scaleX(0.9750);">Transactions: Last 10 results</div>
<div style="position:absolute;left:0;top:50px;width:1400px;height:43px;background:#e6ebef;border-top:1px solid #ccd2d7;border-bottom:1px solid #c8cdd2"></div>
<div class="t" style="left:18.20px;top:60.00px;font-size:14px;line-height:20px;color:#4d545e;font-weight:700;transform:scaleX(1.0143);">ID</div>
<div class="t" style="left:237.30px;top:60.00px;font-size:14px;line-height:20px;color:#4d545e;font-weight:700;transform:scaleX(0.9165);">Type</div>
<div class="t" style="left:423.80px;top:60.00px;font-size:14px;line-height:20px;color:#4d545e;font-weight:700;transform:scaleX(0.9271);">Debited</div>
<div class="t" style="left:620.80px;top:60.00px;font-size:14px;line-height:20px;color:#4d545e;font-weight:700;transform:scaleX(0.9243);">Credited</div>
<div class="t" style="left:828.00px;top:60.00px;font-size:14px;line-height:20px;color:#4d545e;font-weight:700;transform:scaleX(0.8687);">Fees min. amount</div>
<div style="position:absolute;left:0;top:135px;width:1400px;height:1px;background:#cfd4d9"></div>
<div style="position:absolute;left:0;top:179px;width:1400px;height:1px;background:#cfd4d9"></div>
<div style="position:absolute;left:0;top:222px;width:1400px;height:1px;background:#cfd4d9"></div>
<div style="position:absolute;left:0;top:265px;width:1400px;height:1px;background:#cfd4d9"></div>
<div style="position:absolute;left:0;top:308px;width:1400px;height:1px;background:#cfd4d9"></div>
<div style="position:absolute;left:0;top:351px;width:1400px;height:1px;background:#cfd4d9"></div>
<div class="t" style="left:18.20px;top:105.00px;font-size:14px;line-height:20px;color:#5b626b;transform:scaleX(1.0529);">1496903</div>
<div class="t" style="left:237.30px;top:105.00px;font-size:14px;line-height:20px;color:#5b626b;transform:scaleX(0.9680);">Payout</div>
<div class="t" style="left:423.80px;top:105.00px;font-size:14px;line-height:20px;color:#5b626b;transform:scaleX(1.0320);">$13.80</div>
<div class="t" style="left:620.80px;top:105.00px;font-size:14px;line-height:20px;color:#5b626b;transform:scaleX(1.0272);">$0.00</div>
<div class="t" style="left:828.00px;top:105.00px;font-size:14px;line-height:20px;color:#5b626b;transform:scaleX(1.0272);">$0.00</div>
<div class="t" style="left:1156.40px;top:105.00px;font-size:14px;line-height:20px;color:#5b626b;transform:scaleX(0.9496);">1 day ago</div>
<div class="t" style="left:18.20px;top:148.00px;font-size:14px;line-height:20px;color:#5b626b;transform:scaleX(1.0529);">2355281</div>
<div class="t" style="left:237.30px;top:148.00px;font-size:14px;line-height:20px;color:#5b626b;transform:scaleX(0.9477);">Payin</div>
<div class="t" style="left:423.80px;top:148.00px;font-size:14px;line-height:20px;color:#5b626b;transform:scaleX(1.0272);">$0.00</div>
<div class="t" style="left:620.80px;top:148.00px;font-size:14px;line-height:20px;color:#5b626b;transform:scaleX(1.0320);">$13.80</div>
<div class="t" style="left:828.00px;top:148.00px;font-size:14px;line-height:20px;color:#5b626b;transform:scaleX(1.0272);">$0.00</div>
<div class="t" style="left:1156.40px;top:148.00px;font-size:14px;line-height:20px;color:#5b626b;transform:scaleX(0.9496);">1 day ago</div>
<div class="t" style="left:18.20px;top:191.00px;font-size:14px;line-height:20px;color:#5b626b;transform:scaleX(1.0529);">1496902</div>
<div class="t" style="left:237.30px;top:191.00px;font-size:14px;line-height:20px;color:#5b626b;transform:scaleX(0.9680);">Payout</div>
<div class="t" style="left:423.80px;top:191.00px;font-size:14px;line-height:20px;color:#5b626b;transform:scaleX(1.0320);">$22.80</div>
<div class="t" style="left:620.80px;top:191.00px;font-size:14px;line-height:20px;color:#5b626b;transform:scaleX(1.0272);">$0.00</div>
<div class="t" style="left:828.00px;top:191.00px;font-size:14px;line-height:20px;color:#5b626b;transform:scaleX(1.0272);">$0.00</div>
<div class="t" style="left:1156.40px;top:191.00px;font-size:14px;line-height:20px;color:#5b626b;transform:scaleX(0.9496);">1 day ago</div>
<div class="t" style="left:18.20px;top:234.00px;font-size:14px;line-height:20px;color:#5b626b;transform:scaleX(1.0529);">2355280</div>
<div class="t" style="left:237.30px;top:234.00px;font-size:14px;line-height:20px;color:#5b626b;transform:scaleX(0.9477);">Payin</div>
<div class="t" style="left:423.80px;top:234.00px;font-size:14px;line-height:20px;color:#5b626b;transform:scaleX(1.0272);">$0.00</div>
<div class="t" style="left:620.80px;top:234.00px;font-size:14px;line-height:20px;color:#5b626b;transform:scaleX(1.0320);">$22.80</div>
<div class="t" style="left:828.00px;top:234.00px;font-size:14px;line-height:20px;color:#5b626b;transform:scaleX(1.0272);">$0.00</div>
<div class="t" style="left:1156.40px;top:234.00px;font-size:14px;line-height:20px;color:#5b626b;transform:scaleX(0.9496);">1 day ago</div>
<div class="t" style="left:18.20px;top:278.00px;font-size:14px;line-height:20px;color:#5b626b;transform:scaleX(1.0529);">1496901</div>
<div class="t" style="left:237.30px;top:278.00px;font-size:14px;line-height:20px;color:#5b626b;transform:scaleX(0.9680);">Payout</div>
<div class="t" style="left:423.80px;top:278.00px;font-size:14px;line-height:20px;color:#5b626b;transform:scaleX(1.0320);">$63.02</div>
<div class="t" style="left:620.80px;top:278.00px;font-size:14px;line-height:20px;color:#5b626b;transform:scaleX(1.0272);">$0.00</div>
<div class="t" style="left:828.00px;top:278.00px;font-size:14px;line-height:20px;color:#5b626b;transform:scaleX(1.0272);">$0.00</div>
<div class="t" style="left:1156.40px;top:278.00px;font-size:14px;line-height:20px;color:#5b626b;transform:scaleX(0.9496);">1 day ago</div>
<div class="t" style="left:18.20px;top:321.00px;font-size:14px;line-height:20px;color:#5b626b;transform:scaleX(1.0529);">2355279</div>
<div class="t" style="left:237.30px;top:321.00px;font-size:14px;line-height:20px;color:#5b626b;transform:scaleX(0.9477);">Payin</div>
<div class="t" style="left:423.80px;top:321.00px;font-size:14px;line-height:20px;color:#5b626b;transform:scaleX(1.0272);">$0.00</div>
<div class="t" style="left:620.80px;top:321.00px;font-size:14px;line-height:20px;color:#5b626b;transform:scaleX(1.0320);">$63.02</div>
<div class="t" style="left:828.00px;top:321.00px;font-size:14px;line-height:20px;color:#5b626b;transform:scaleX(1.0272);">$0.00</div>
<div class="t" style="left:1156.40px;top:321.00px;font-size:14px;line-height:20px;color:#5b626b;transform:scaleX(0.9496);">1 day ago</div>
<div class="t" style="left:18.20px;top:364.00px;font-size:14px;line-height:20px;color:#5b626b;transform:scaleX(1.0529);">1496900</div>
<div class="t" style="left:237.30px;top:364.00px;font-size:14px;line-height:20px;color:#5b626b;transform:scaleX(0.9680);">Payout</div>
<div class="t" style="left:423.80px;top:364.00px;font-size:14px;line-height:20px;color:#5b626b;transform:scaleX(1.0320);">$73.09</div>
<div class="t" style="left:620.80px;top:364.00px;font-size:14px;line-height:20px;color:#5b626b;transform:scaleX(1.0272);">$0.00</div>
<div class="t" style="left:828.00px;top:364.00px;font-size:14px;line-height:20px;color:#5b626b;transform:scaleX(1.0272);">$0.00</div>
<div class="t" style="left:1156.40px;top:364.00px;font-size:14px;line-height:20px;color:#5b626b;transform:scaleX(0.9496);">1 day ago</div>
</div>
</body>
</html>
